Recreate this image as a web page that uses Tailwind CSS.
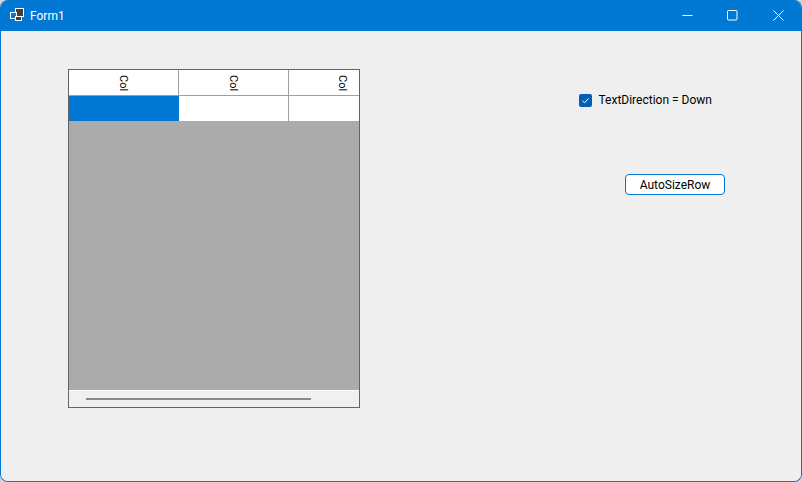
<!DOCTYPE html>
<html lang="en">
<head>
  <meta charset="UTF-8" />
  <title>Form1</title>
  <script src="https://cdn.jsdelivr.net/npm/@tailwindcss/browser@4"></script>
</head>
<body class="w-[802px] h-[482px] overflow-hidden bg-[#d4d4d4] font-['Roboto','Noto_Sans',sans-serif] text-[12px] text-black">
  <div class="flex flex-col h-[482px] rounded-[8px] overflow-hidden border border-[#0078d4] border-t-0">
    <!-- title bar -->
    <div class="flex items-center h-[31px] bg-[#0078d4] text-white shrink-0">
      <svg class="ml-[9px] mt-[-1px]" width="15" height="14" viewBox="0 0 15 14" fill="none">
        <rect x="5.5" y="0.5" width="8" height="8" fill="#404040" stroke="#fff" />
        <rect x="0.5" y="4.5" width="6" height="6" fill="#0078d4" stroke="#fff" />
        <rect x="5.5" y="8.5" width="6" height="4" fill="#404040" stroke="#fff" />
      </svg>
      <span class="ml-[5px]">Form1</span>
      <div class="ml-auto flex items-center h-full">
        <svg class="mr-[34px]" width="11" height="11" viewBox="0 0 11 11" fill="none"><path d="M0.5 5.5H10.5" stroke="#fff" /></svg>
        <svg class="mr-[35px]" width="11" height="11" viewBox="0 0 11 11" fill="none"><rect x="0.5" y="0.5" width="9.5" height="9.5" rx="1" stroke="#fff" /></svg>
        <svg class="mr-[17px]" width="11" height="11" viewBox="0 0 11 11" fill="none"><path d="M0.5 0.5L10.5 10.5M10.5 0.5L0.5 10.5" stroke="#fff" /></svg>
      </div>
    </div>
    <!-- client area -->
    <div class="flex flex-1 bg-[#efefef] pl-[67px] pt-[38px]">
      <!-- data grid -->
      <div class="flex flex-col w-[292px] h-[339px] border border-[#646464] bg-[#ababab]">
        <div class="grid grid-cols-[110px_110px_70px] h-[26px] bg-white border-b border-[#a0a0a0] text-[11px]">
          <div class="flex items-center justify-center pt-[1px] border-r border-[#a0a0a0]"><span class="[writing-mode:vertical-rl] leading-none">Col</span></div>
          <div class="flex items-center justify-center pt-[1px] border-r border-[#a0a0a0]"><span class="[writing-mode:vertical-rl] leading-none">Col</span></div>
          <div class="flex items-center justify-end pt-[1px] pr-[11px]"><span class="[writing-mode:vertical-rl] leading-none">Col</span></div>
        </div>
        <div class="grid grid-cols-[110px_110px_70px] h-[25px] bg-white">
          <div class="bg-[#0078d4]"></div>
          <div class="border-r border-[#a0a0a0]"></div>
          <div></div>
        </div>
        <div class="flex-1"></div>
        <div class="flex items-center h-[17px] bg-[#f0f0f0] pl-[17px] border-t border-white">
          <div class="w-[225px] h-[2px] bg-[#8a8a8a]"></div>
        </div>
      </div>
      <!-- controls -->
      <div class="flex flex-col items-end w-[365px] pt-[24px]">
        <div class="flex items-center self-start ml-[219px] h-[14px]">
          <span class="flex items-center justify-center w-[13px] h-[13px] rounded-[2px] bg-[#005fb8]">
            <svg width="9" height="9" viewBox="0 0 9 9" fill="none"><path d="M1.5 4.8L3.6 6.8L7.5 2.4" stroke="#fff" /></svg>
          </span>
          <span class="ml-[6.5px]">TextDirection = Down</span>
        </div>
        <button class="mt-[67px] w-[100px] h-[21px] bg-white border border-[#0078d4] rounded-[4px] leading-none">AutoSizeRow</button>
      </div>
    </div>
  </div>
</body>
</html>
